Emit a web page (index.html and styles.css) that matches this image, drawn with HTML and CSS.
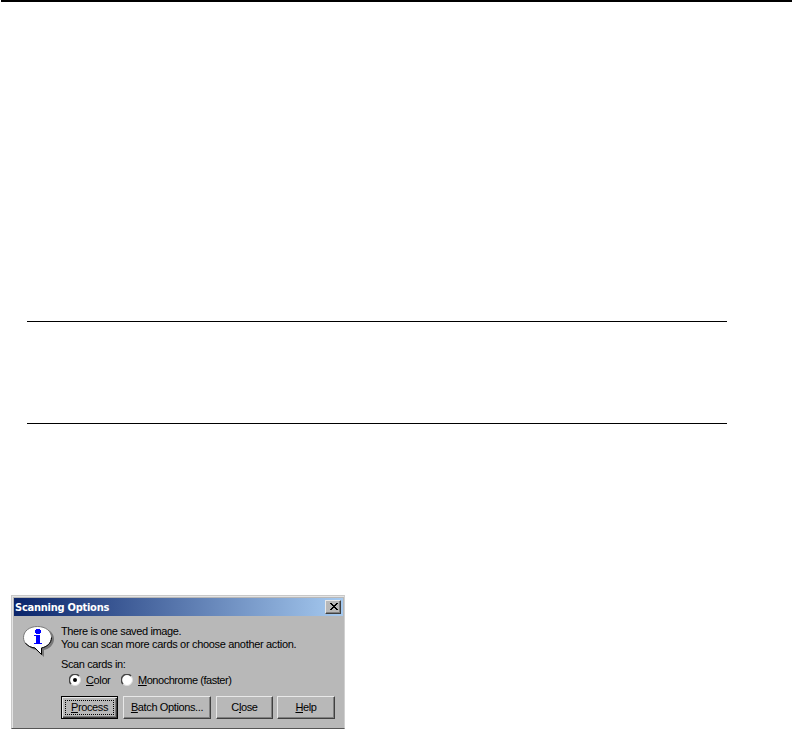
FILE: index.html
```html
<!DOCTYPE html>
<html lang="en">
<head>
<meta charset="utf-8">
<title>Scanning Options</title>
<link rel="stylesheet" href="styles.css">
</head>
<body>
<main class="page">
  <hr class="top-rule">
  <section class="note"></section>
  <div class="dialog" role="dialog" aria-labelledby="title">
    <header class="titlebar">
      <h1 class="title" id="title">Scanning Options</h1>
      <button class="close-box" aria-label="Close">
        <svg width="8" height="7" viewBox="0 0 8 7" shape-rendering="crispEdges"><path d="M0 0h2v1h1v1h2v-1h1v-1h2v1h-1v1h-1v1h-1v1h1v1h1v1h1v1h-2v-1h-1v-1h-2v1h-1v1h-2v-1h1v-1h1v-1h1v-1h-1v-1h-1v-1h-1z"/></svg>
      </button>
    </header>
    <div class="content">
      <svg class="info" width="32" height="32" viewBox="0 0 32 32">
        <path fill="#777" d="M17 3C26 3 31 8 31 14C31 20 26 24 21 25V32L13 25C7 24 4 20 4 14Z"/>
        <path fill="#fff" stroke="#777" d="M14.5 1.5C22.500 1.500 28.500 6 28.500 12.500C28.500 18.500 23.500 22 18.500 23V29.500L12 23C5.500 22.500 .5 18.500 .5 12.500C.5 6 6.500 1.500 14.500 1.500Z"/>
        <path fill="none" stroke="#000" d="M28.500 12.500C28.500 18.500 23.500 22 18.500 23V29.500L12 23C8 22.500 4.500 21 2.500 18"/>
        <g fill="#00f" shape-rendering="crispEdges"><path d="M13 4h4v1h1v3h-1v1h-4v-1h-1v-3h1zM11 10h6v8h2v1h-8v-1h2v-7h-2z"/></g>
      </svg>
      <div class="main">
        <p class="text message"><span class="line one">There is one saved image.</span><span class="line two">You can scan more cards or choose another action.</span></p>
        <p class="text prompt">Scan cards in:</p>
        <div class="choices">
          <label class="choice"><svg width="12" height="12" viewBox="0 0 12 12"><circle cx="6" cy="6" r="5.500" fill="#fff" stroke="#ddd"/><path d="M2 10A5.500 5.500 0 0 1 10 2" fill="none" stroke="#444" stroke-width="1.500"/><circle cx="6" cy="6" r="2"/></svg><span class="text color"><u>C</u>olor</span></label>
          <label class="choice"><svg width="12" height="12" viewBox="0 0 12 12"><circle cx="6" cy="6" r="5.500" fill="#fff" stroke="#ddd"/><path d="M2 10A5.500 5.500 0 0 1 10 2" fill="none" stroke="#444" stroke-width="1.500"/></svg><span class="text mono"><u>M</u>onochrome (faster)</span></label>
        </div>
        <div class="buttons">
          <button class="btn default"><span class="focus"><span class="text process"><u>P</u>rocess</span></span></button>
          <button class="btn wide"><span class="text batch"><u>B</u>atch Options...</span></button>
          <button class="btn"><span class="text close">C<u>l</u>ose</span></button>
          <button class="btn help-btn"><span class="text help"><u>H</u>elp</span></button>
        </div>
      </div>
    </div>
  </div>
</main>
</body>
</html>
```
FILE: styles.css
```css
* { box-sizing: border-box; }
html, body { margin: 0; overflow: hidden; background: #fff; }
body { font-family: "Liberation Sans", Arial, sans-serif; font-size: 11px; color: #000; }
p, h1 { margin: 0; }
svg { display: block; flex: none; }
.page { height: 729px; display: flex; flex-direction: column; }
.top-rule { width: 791px; height: 2px; margin: 0 1px; border: 0; background: #000; flex: none; }
.note { width: 700px; height: 103px; margin: 319px 0 171px 27px; border: solid #000; border-width: 1px 0; flex: none; }
.dialog { width: 334px; height: 134px; margin-left: 11px; padding: 1px; background: #b8b8b8; border: 1px solid #c8c8c8; border-right-color: #d0d0d0; border-bottom-color: #555; box-shadow: inset 1px 1px #e4e4e4; flex: none; }
.titlebar { display: flex; align-items: center; justify-content: space-between; height: 18px; margin: 1px 0 0 1px; padding: 0 2px 0 1px; background: linear-gradient(90deg, #0a246a, #a6caf0); }
.title { padding-top: 1px; font: bold 11px/18px "DejaVu Sans Condensed", "DejaVu Sans", sans-serif; color: #fff; letter-spacing: -0.25px; white-space: nowrap; }
.close-box { width: 16px; height: 14px; padding: 0 0 1px 1px; display: grid; place-items: center; background: #b8b8b8; border: 1px solid #e8e8e8; border-right-color: #404040; border-bottom-color: #404040; box-shadow: inset -1px -1px #808080; }
.content { display: flex; padding: 9px 0 0 10px; }
.info { margin-right: 6px; }
.text { display: block; font-size: 11px; line-height: 13px; white-space: nowrap; letter-spacing: -0.38px; }
.text u { text-decoration-thickness: 1px; text-underline-offset: 1px; }
.line { display: block; }
.two { letter-spacing: -0.32px; }
.prompt { margin-top: 7px; }
.choices { display: flex; gap: 11px; margin: 2px 0 0 8px; height: 14px; align-items: center; }
.choice { display: flex; align-items: center; gap: 5px; }
.color { width: 24px; }
.mono { letter-spacing: -0.46px; }
.buttons { display: flex; gap: 5px; margin-top: 9px; }
.btn { width: 57px; height: 23px; padding: 0; display: flex; align-items: center; justify-content: center; font-family: inherit; color: #000; background: #b8b8b8; border: 1px solid #e8e8e8; border-right-color: #404040; border-bottom-color: #404040; box-shadow: inset -1px -1px #808080; border-radius: 0; }
.wide { width: 88px; }
.help-btn { width: 58px; margin-left: -1px; }
.default { border-color: #000; box-shadow: inset 1px 1px #e8e8e8, inset -1px -1px #404040, inset -2px -2px #808080; }
.focus { width: 49px; height: 15px; border: 1px dotted #000; display: flex; align-items: center; justify-content: center; }
```
